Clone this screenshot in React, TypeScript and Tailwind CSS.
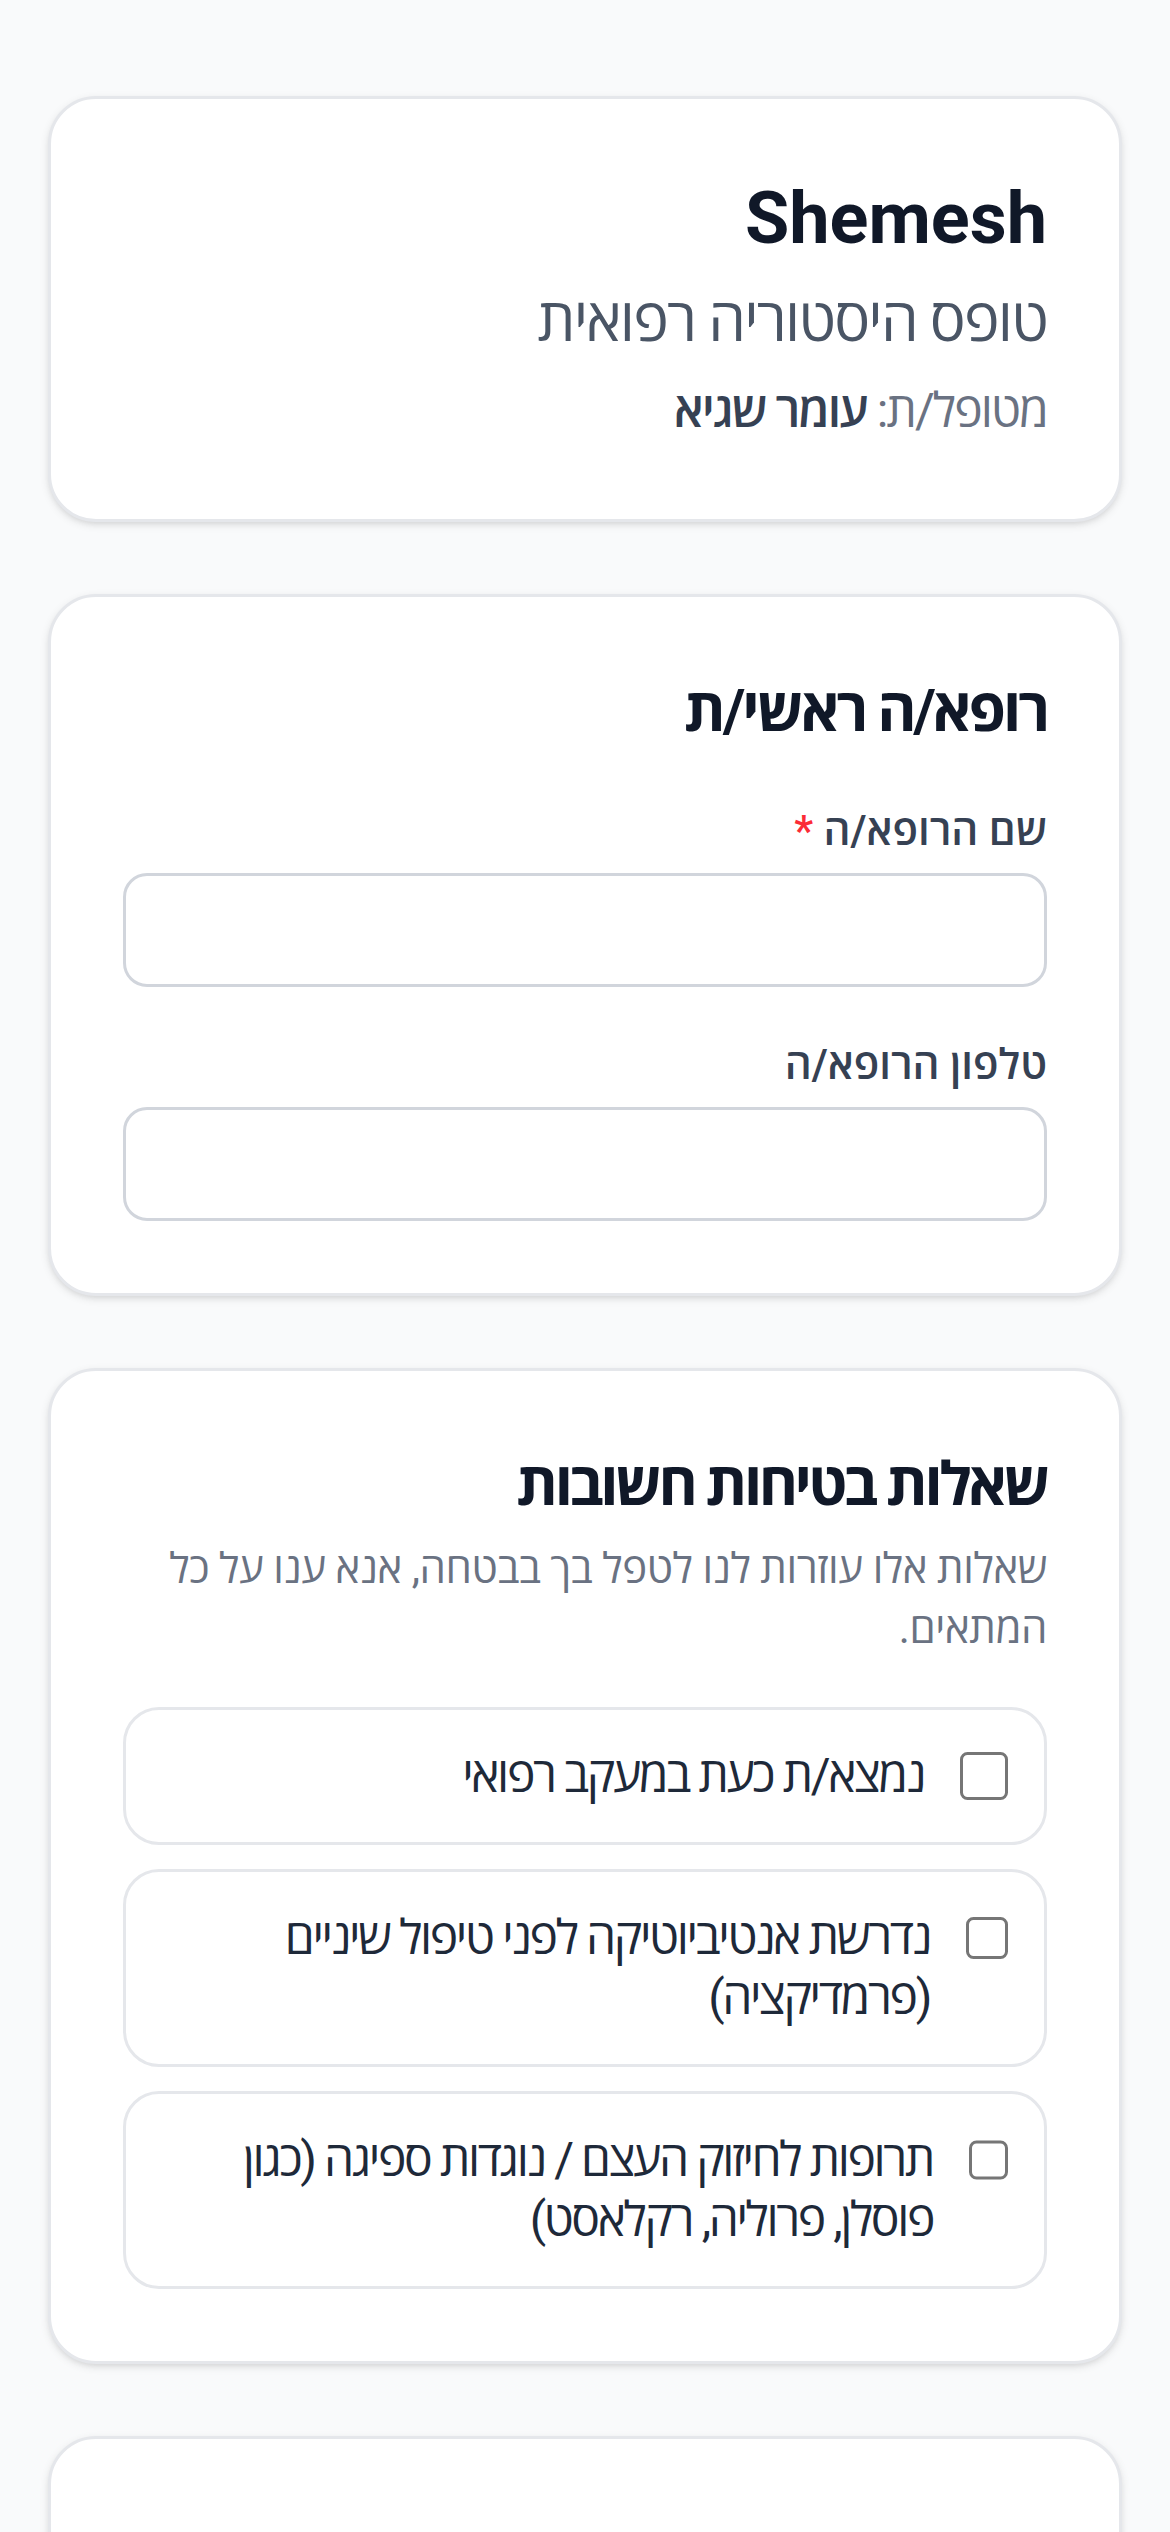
import React from "react";

const items = [
  "נמצא/ת כעת במעקב רפואי",
  "נדרשת אנטיביוטיקה לפני טיפול שיניים (פרמדיקציה)",
  "תרופות לחיזוק העצם / נוגדות ספיגה (כגון פוסלן, פרוליה, רקלאסט)",
];

export default function App() {
  return (
    <div
      dir="rtl"
      className="[zoom:3] min-h-screen bg-gray-50 font-['Roboto','Open_Sans',sans-serif] text-right"
    >
      <div className="px-4 pt-8 pb-8 space-y-6">
        <div className="bg-white rounded-2xl border border-gray-200 shadow-sm p-6">
          <h1 className="text-2xl font-bold text-gray-900">Shemesh</h1>
          <p className="mt-1 text-xl text-gray-600 tracking-[-0.03em]">טופס היסטוריה רפואית</p>
          <p className="mt-1 text-base text-gray-500 tracking-[-0.04em]">
            מטופל/ת: <span className="font-semibold text-gray-700">עומר שגיא</span>
          </p>
        </div>

        <div className="bg-white rounded-2xl border border-gray-200 shadow-sm p-6">
          <h2 className="text-xl font-bold text-gray-900 mb-4 tracking-[-0.05em]">רופא/ה ראשי/ת</h2>
          <div className="space-y-4">
            <div>
              <label className="block text-sm font-semibold text-gray-700 mb-1">
                שם הרופא/ה <span className="text-red-500">*</span>
              </label>
              <input
                type="text"
                className="block w-full h-[38px] px-3 bg-white border border-gray-300 rounded-lg text-sm text-gray-900 outline-none"
              />
            </div>
            <div>
              <label className="block text-sm font-semibold text-gray-700 mb-1">טלפון הרופא/ה</label>
              <input
                type="tel"
                className="block w-full h-[38px] px-3 bg-white border border-gray-300 rounded-lg text-sm text-gray-900 outline-none"
              />
            </div>
          </div>
        </div>

        <div className="bg-white rounded-2xl border border-gray-200 shadow-sm p-6">
          <h2 className="text-xl font-bold text-gray-900 mb-1 tracking-[-0.06em]">שאלות בטיחות חשובות</h2>
          <p className="text-sm text-gray-500 mb-4 tracking-[-0.01em]">
            שאלות אלו עוזרות לנו לטפל בך בבטחה, אנא ענו על כל המתאים.
          </p>
          <div className="space-y-2">
            {items.map((t) => (
              <label
                key={t}
                className="flex items-start gap-3 p-3 border border-gray-200 rounded-xl bg-white"
              >
                <input type="checkbox" className="mt-0.5 h-4 w-4" />
                <span className="text-base leading-5 text-gray-800 tracking-[-0.05em]">{t}</span>
              </label>
            ))}
          </div>
        </div>

        <div className="bg-white rounded-2xl border border-gray-200 shadow-sm p-6">
          <h2 className="text-xl font-bold text-gray-900 mb-4 tracking-[-0.06em]">תרופות קבועות</h2>
          <div className="space-y-4">
            <div>
              <label className="block text-sm font-semibold text-gray-700 mb-1">תרופות שאני נוטל/ת</label>
              <textarea className="block w-full h-24 px-3 py-2 bg-white border border-gray-300 rounded-lg text-sm outline-none" />
            </div>
          </div>
        </div>
      </div>
    </div>
  );
}
